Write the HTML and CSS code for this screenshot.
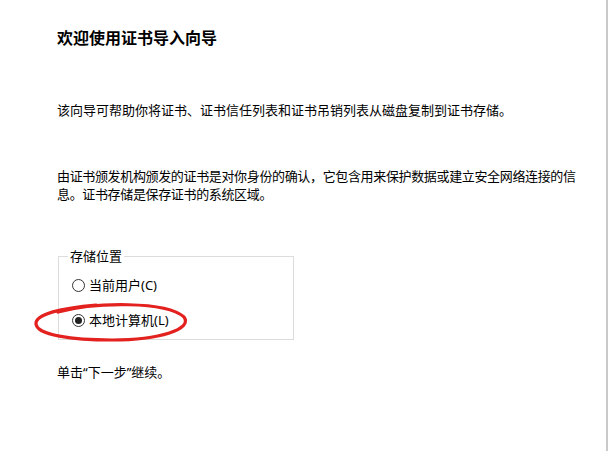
FILE: index.html
```html
<!DOCTYPE html>
<html lang="zh-CN">
<head>
<meta charset="utf-8">
<title>证书导入向导</title>
<link rel="stylesheet" href="styles.css">
</head>
<body>
<div class="page">
  <h1 class="title">欢迎使用证书导入向导</h1>
  <p class="intro">该向导可帮助你将证书、证书信任列表和证书吊销列表从磁盘复制到证书存储。</p>
  <p class="desc">由证书颁发机构颁发的证书是对你身份的确认，它包含用来保护数据或建立安全网络连接的信息。证书存储是保存证书的系统区域。</p>
  <fieldset class="group">
    <legend class="legend">存储位置</legend>
    <div class="radio-row"><span class="radio"></span><span>当前用户(C)</span></div>
    <div class="radio-row"><span class="radio checked"></span><span>本地计算机(L)</span></div>
  </fieldset>
  <p class="next">单击“下一步”继续。</p>
  <svg class="mark" width="609" height="451" viewBox="0 0 609 451">
    <path d="M58 312 C95 302 166 301 184 317 C193 329 160 340 112 340 C72 340 37 335 36 324 C35 314 62 308 96 305" fill="none" stroke="#e3211f" stroke-width="3.2" stroke-linecap="round"/>
  </svg>
</div>
</body>
</html>
```

FILE: styles.css
```css
html, body {
  margin: 0;
  padding: 0;
  background: #ffffff;
}
body {
  font-family: "Noto Sans", "Noto Sans CJK SC", sans-serif;
  font-size: 13px;
  color: #000000;
}
.page {
  position: relative;
  box-sizing: border-box;
  width: 608px;
  height: 451px;
  border-right: 2px solid #c9c9c9;
  padding-left: 57px;
  overflow: hidden;
}
.title {
  margin: 0;
  padding-top: 27px;
  font-size: 16px;
  line-height: 22px;
  font-weight: bold;
}
.intro {
  margin: 52px 0 0 0;
  line-height: 19px;
}
.desc {
  margin: 47px 0 0 0;
  width: 530px;
  line-height: 18px;
  letter-spacing: -0.35px;
}
.group {
  margin: 44px 0 0 1px;
  box-sizing: border-box;
  width: 236px;
  border: 1px solid #dcdcdc;
  padding: 10px 12px 9px 13px;
}
.legend {
  padding: 0 2px;
  margin-left: -4px;
  line-height: 19px;
}
.radio-row {
  display: flex;
  align-items: center;
  gap: 4px;
  line-height: 19px;
}
.radio-row + .radio-row {
  margin-top: 16px;
}
.radio {
  box-sizing: border-box;
  width: 13px;
  height: 13px;
  border: 1px solid #333333;
  border-radius: 50%;
  background: #ffffff;
  display: flex;
  align-items: center;
  justify-content: center;
}
.radio.checked::after {
  content: "";
  width: 7px;
  height: 7px;
  border-radius: 50%;
  background: #222222;
}
.next {
  margin: 23px 0 0 0;
  line-height: 19px;
}
.mark {
  position: absolute;
  left: 0;
  top: 0;
  pointer-events: none;
}
```
